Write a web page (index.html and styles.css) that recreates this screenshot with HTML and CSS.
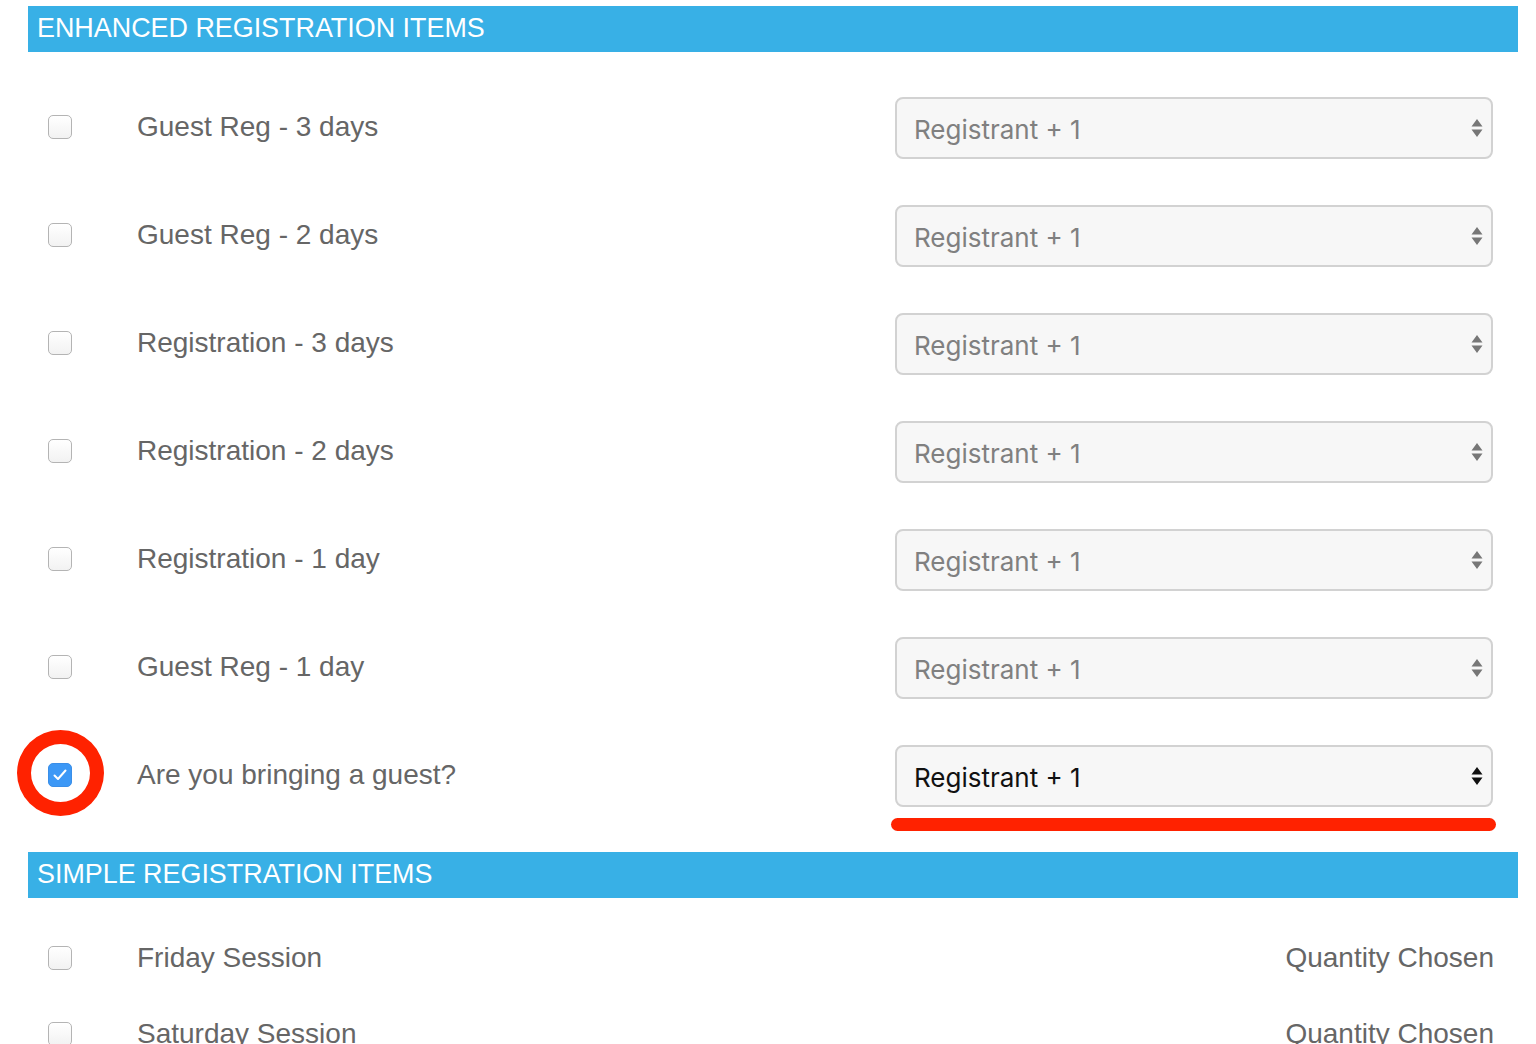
FILE: index.html
```html
<!DOCTYPE html>
<html lang="en">
<head>
  <meta charset="UTF-8" />
  <title>Registration Items</title>
  <link rel="stylesheet" href="styles.css">
</head>
<body>
  <div class="page">
    <div class="section-head">ENHANCED REGISTRATION ITEMS</div>

    <div class="items enhanced">
      <div class="item">
        <span class="check"></span>
        <span class="item-name">Guest Reg - 3 days</span>
        <div class="fake-select">
          <span>Registrant + 1</span>
          <svg class="arrows" width="12" height="20" viewBox="0 0 12 20"><path d="M6 1 L11.5 8.5 H0.5 Z M6 19 L11.5 11.5 H0.5 Z" fill="currentColor"/></svg>
        </div>
      </div>
      <div class="item">
        <span class="check"></span>
        <span class="item-name">Guest Reg - 2 days</span>
        <div class="fake-select">
          <span>Registrant + 1</span>
          <svg class="arrows" width="12" height="20" viewBox="0 0 12 20"><path d="M6 1 L11.5 8.5 H0.5 Z M6 19 L11.5 11.5 H0.5 Z" fill="currentColor"/></svg>
        </div>
      </div>
      <div class="item">
        <span class="check"></span>
        <span class="item-name">Registration - 3 days</span>
        <div class="fake-select">
          <span>Registrant + 1</span>
          <svg class="arrows" width="12" height="20" viewBox="0 0 12 20"><path d="M6 1 L11.5 8.5 H0.5 Z M6 19 L11.5 11.5 H0.5 Z" fill="currentColor"/></svg>
        </div>
      </div>
      <div class="item">
        <span class="check"></span>
        <span class="item-name">Registration - 2 days</span>
        <div class="fake-select">
          <span>Registrant + 1</span>
          <svg class="arrows" width="12" height="20" viewBox="0 0 12 20"><path d="M6 1 L11.5 8.5 H0.5 Z M6 19 L11.5 11.5 H0.5 Z" fill="currentColor"/></svg>
        </div>
      </div>
      <div class="item">
        <span class="check"></span>
        <span class="item-name">Registration - 1 day</span>
        <div class="fake-select">
          <span>Registrant + 1</span>
          <svg class="arrows" width="12" height="20" viewBox="0 0 12 20"><path d="M6 1 L11.5 8.5 H0.5 Z M6 19 L11.5 11.5 H0.5 Z" fill="currentColor"/></svg>
        </div>
      </div>
      <div class="item">
        <span class="check"></span>
        <span class="item-name">Guest Reg - 1 day</span>
        <div class="fake-select">
          <span>Registrant + 1</span>
          <svg class="arrows" width="12" height="20" viewBox="0 0 12 20"><path d="M6 1 L11.5 8.5 H0.5 Z M6 19 L11.5 11.5 H0.5 Z" fill="currentColor"/></svg>
        </div>
      </div>
      <div class="item">
        <span class="check checked">
          <svg width="14" height="12" viewBox="0 0 14 12"><path d="M1.5 6.5 L5 10 L12.5 1.5" fill="none" stroke="#fff" stroke-width="2" stroke-linecap="round" stroke-linejoin="round"/></svg>
          <span class="ring"></span>
        </span>
        <span class="item-name">Are you bringing a guest?</span>
        <div class="fake-select active">
          <span>Registrant + 1</span>
          <svg class="arrows" width="12" height="20" viewBox="0 0 12 20"><path d="M6 1 L11.5 8.5 H0.5 Z M6 19 L11.5 11.5 H0.5 Z" fill="currentColor"/></svg>
          <span class="underline"></span>
        </div>
      </div>
    </div>

    <div class="section-head">SIMPLE REGISTRATION ITEMS</div>

    <div class="items simple">
      <div class="item">
        <span class="check"></span>
        <span class="item-name">Friday Session</span>
        <span class="qty">Quantity Chosen</span>
      </div>
      <div class="item">
        <span class="check"></span>
        <span class="item-name">Saturday Session</span>
        <span class="qty">Quantity Chosen</span>
      </div>
    </div>
  </div>
</body>
</html>
```

FILE: styles.css
```css
body {
  margin: 0;
  background: #fff;
  font-family: "Liberation Sans", Arial, sans-serif;
  overflow: hidden;
}
.page {
  width: 1490px;
  margin: 6px 0 0 28px;
}
.section-head {
  background-color: #38b0e6;
  color: #fff;
  height: 46px;
  line-height: 44px;
  padding-left: 9px;
  font-size: 26.9px;
}
.items {
  display: flex;
  flex-direction: column;
}
.enhanced {
  padding: 21px 0 23px;
}
.simple {
  padding-top: 22px;
}
.item {
  display: flex;
  align-items: center;
  height: 108px;
  padding: 0 24px 0 20px;
}
.simple .item {
  height: 76px;
}
.check {
  position: relative;
  width: 22px;
  height: 22px;
  border: 1px solid #b4b4b4;
  border-radius: 5px;
  background: linear-gradient(#fff, #f2f2f2);
  flex-shrink: 0;
  display: flex;
  align-items: center;
  justify-content: center;
}
.check.checked {
  background: #3c98f6;
  border-color: #3a8ee8;
}
.ring {
  position: absolute;
  left: -32px;
  top: -34px;
  width: 87px;
  height: 86px;
  border: 14px solid #ff2200;
  border-radius: 50%;
  box-sizing: border-box;
}
.item-name {
  margin-left: 65px;
  font-size: 28px;
  color: #666;
  flex: 1;
}
.fake-select {
  position: relative;
  width: 569px;
  height: 56px;
  border: 2px solid #d2d2d2;
  border-radius: 8px;
  background: #f7f7f7;
  display: flex;
  align-items: center;
  justify-content: space-between;
  padding: 2px 8px 0 17px;
  margin: 2px 1px 0 0;
  font-family: Inter, "Liberation Sans", sans-serif;
  font-size: 26px;
  color: #808080;
}
.fake-select.active {
  color: #111;
}
.arrows {
  color: #777;
  margin-top: -2px;
}
.active .arrows {
  color: #111;
}
.underline {
  position: absolute;
  left: -6px;
  right: -5px;
  top: 71px;
  height: 13px;
  border-radius: 7px;
  background: #ff2200;
}
.qty {
  font-size: 28px;
  color: #666;
}
```
